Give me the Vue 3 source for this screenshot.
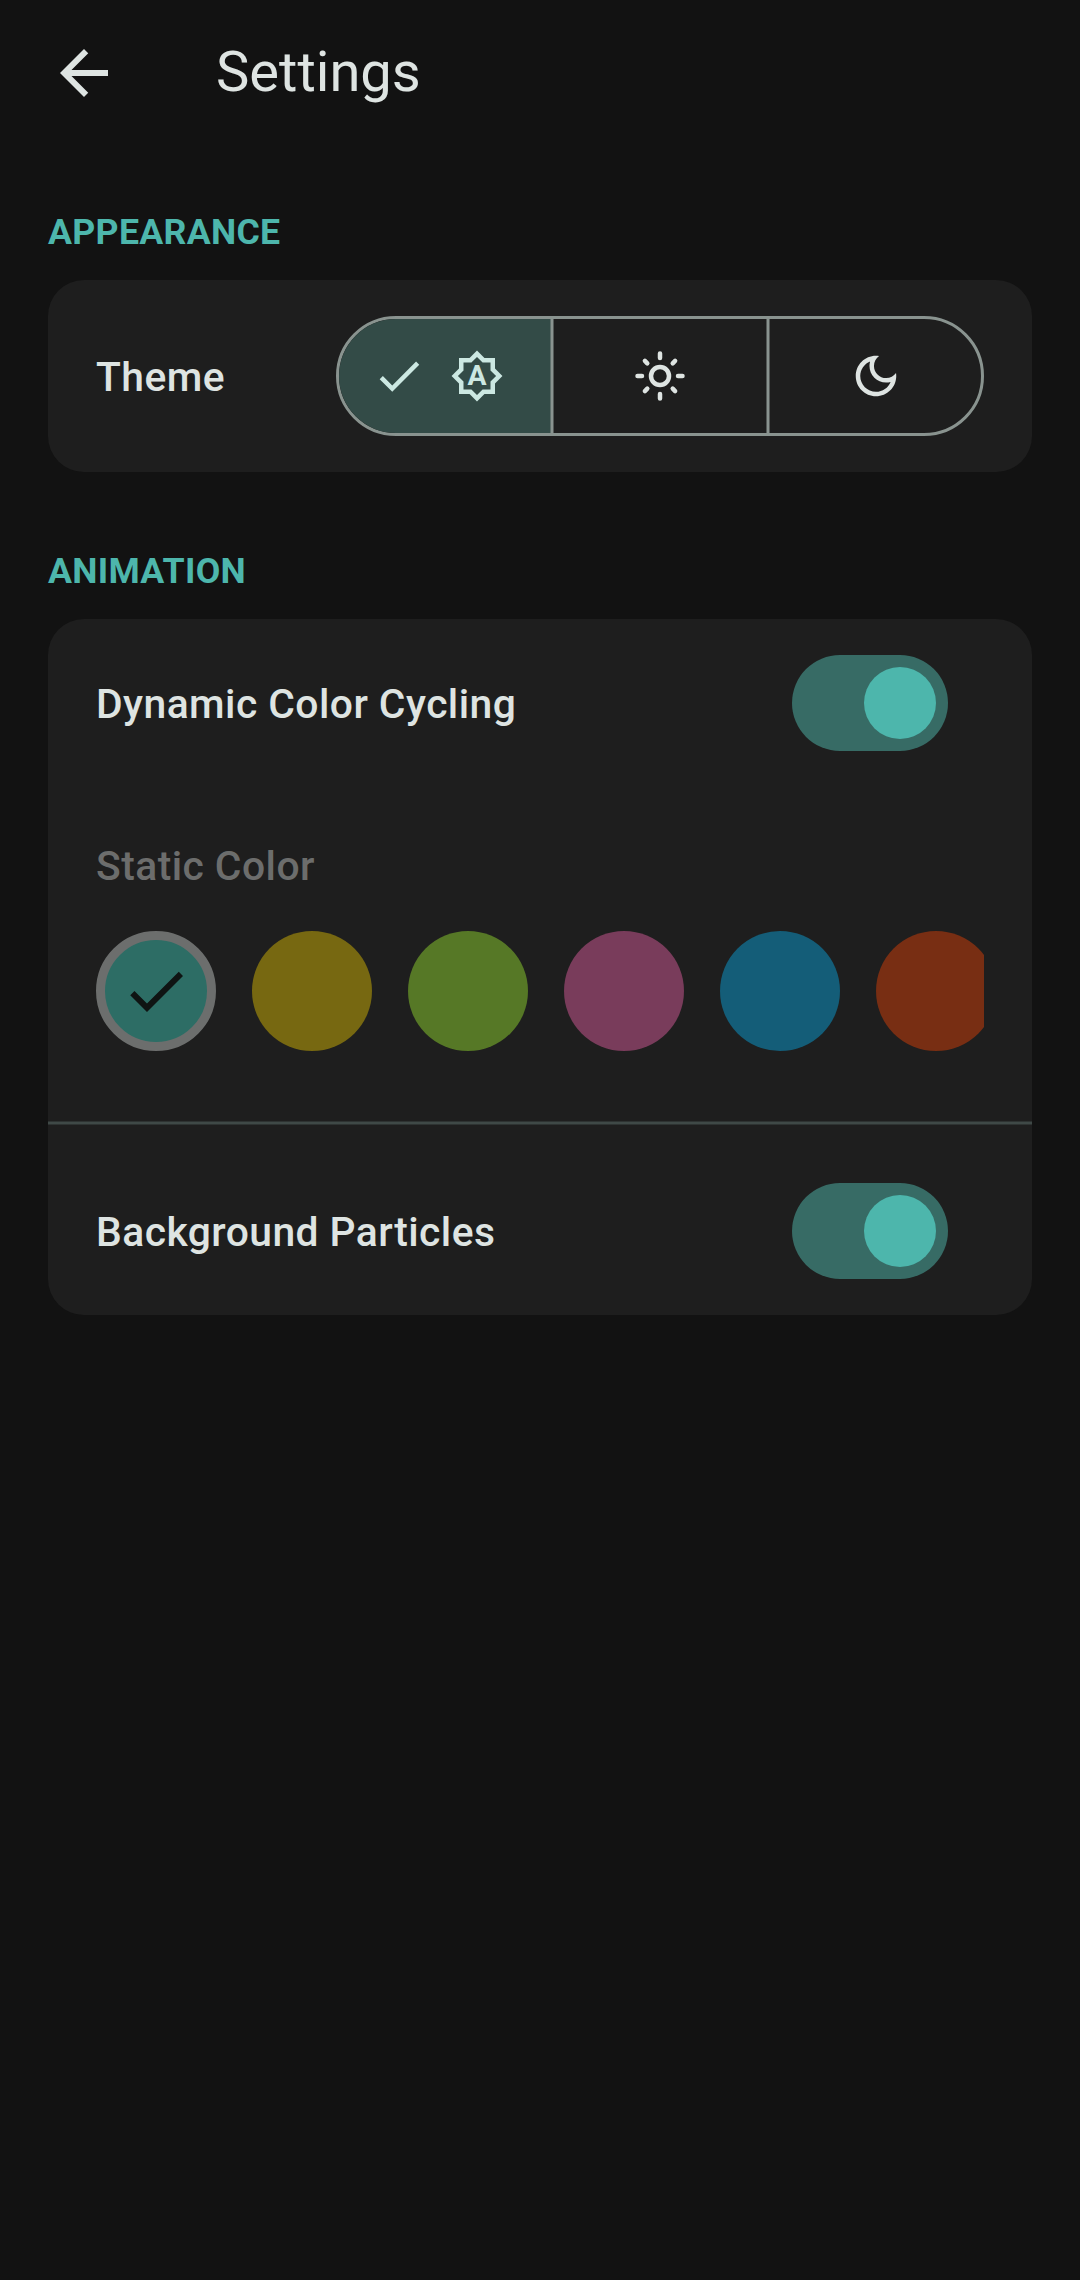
<script setup>
import { ref } from 'vue'

const theme = ref('auto')
const cycling = ref(true)
const particles = ref(true)
const selected = ref(0)

const swatches = ['#2d6d65', '#776811', '#567826', '#793c5b', '#145d78', '#782e13']
</script>

<template>
  <main class="screen">
    <header class="topbar">
      <button class="back" aria-label="Back">
        <svg viewBox="0 0 24 24"><path d="M20 11H7.83l5.59-5.59L12 4l-8 8 8 8 1.41-1.41L7.83 13H20v-2z" /></svg>
      </button>
      <h1>Settings</h1>
    </header>

    <section class="appearance">
      <h2>APPEARANCE</h2>
      <div class="card theme-card">
        <span class="label">Theme</span>
        <div class="segments">
          <button class="segment auto" :class="{ active: theme === 'auto' }" @click="theme = 'auto'">
            <svg viewBox="0 0 24 24"><path d="M9 16.17L4.83 12l-1.42 1.41L9 19 21 7l-1.41-1.41z" /></svg>
            <svg viewBox="0 0 24 24">
              <path fill-rule="evenodd" d="M20 8.69V4h-4.69L12 .69 8.69 4H4v4.69L.69 12 4 15.31V20h4.69L12 23.31 15.31 20H20v-4.69L23.31 12 20 8.69zm-2 5.79V18h-3.52L12 20.48 9.52 18H6v-3.52L3.52 12 6 9.52V6h3.52L12 3.52 14.48 6H18v3.52L20.48 12 18 14.48z" />
              <text x="12" y="16" text-anchor="middle">A</text>
            </svg>
          </button>
          <i class="divider"></i>
          <button class="segment light" @click="theme = 'light'">
            <svg viewBox="0 0 24 24" class="sun">
              <circle cx="12" cy="12" r="4" />
              <path d="M12 2v2M12 20v2M2 12h2M20 12h2M5.29 5.29l1.06 1.06M17.65 17.65l1.06 1.06M5.29 18.71l1.06-1.06M17.65 6.35l1.06-1.06" />
            </svg>
          </button>
          <i class="divider"></i>
          <button class="segment dark" @click="theme = 'dark'">
            <svg viewBox="0 0 24 24"><path d="M9.37 5.51C9.19 6.15 9.1 6.82 9.1 7.5c0 4.08 3.32 7.4 7.4 7.4.68 0 1.35-.09 1.99-.27C17.45 17.19 14.93 19 12 19c-3.86 0-7-3.14-7-7 0-2.93 1.81-5.45 4.37-6.49zM12 3c-4.97 0-9 4.03-9 9s4.03 9 9 9 9-4.03 9-9c0-.46-.04-.92-.1-1.36-.98 1.37-2.58 2.26-4.4 2.26-2.98 0-5.4-2.42-5.4-5.4 0-1.81.89-3.42 2.26-4.4C12.92 3.04 12.46 3 12 3z" /></svg>
          </button>
        </div>
      </div>
    </section>

    <section class="animation">
      <h2>ANIMATION</h2>
      <div class="card animation-card">
        <div class="row">
          <span class="label">Dynamic Color Cycling</span>
          <button class="switch" :class="{ on: cycling }" role="switch" :aria-checked="cycling" @click="cycling = !cycling"><i></i></button>
        </div>
        <div class="label static-label">Static Color</div>
        <div class="swatches">
          <button
            v-for="(color, i) in swatches"
            :key="color"
            class="swatch"
            :class="{ selected: i === selected }"
            :style="{ backgroundColor: color }"
          >
            <svg v-if="i === selected" viewBox="0 0 24 24"><path d="M9 16.17L4.83 12l-1.42 1.41L9 19 21 7l-1.41-1.41z" /></svg>
          </button>
        </div>
        <div class="rule"></div>
        <div class="row">
          <span class="label">Background Particles</span>
          <button class="switch" :class="{ on: particles }" role="switch" :aria-checked="particles" @click="particles = !particles"><i></i></button>
        </div>
      </div>
    </section>
  </main>
</template>

<style>
body {
  background: #121212;
}
</style>

<style scoped>
* {
  box-sizing: border-box;
}
button {
  border: 0;
  padding: 0;
  background: none;
  color: inherit;
}
svg {
  display: block;
  fill: currentColor;
}
.screen {
  min-height: 2280px;
  background: #121212;
  color: #dee4e2;
  font-family: Roboto, sans-serif;
}
.topbar {
  height: 144px;
  padding-left: 48px;
  display: flex;
  align-items: center;
}
.back svg {
  width: 72px;
  height: 72px;
  margin-top: 2px;
}
h1 {
  margin: 0 0 0 96px;
  font-size: 56.1px;
  font-weight: 400;
  line-height: 72px;
}
section {
  padding: 0 48px;
}
.appearance {
  padding-top: 64px;
}
.animation {
  padding-top: 75px;
}
h2 {
  margin: 0 0 24px;
  font-size: 35.7px;
  font-weight: 700;
  line-height: 48px;
  letter-spacing: 0.3px;
  color: #4db6ac;
}
.card {
  background: #1e1e1e;
  border-radius: 36px;
}
.label {
  font-size: 40.8px;
  font-weight: 500;
  line-height: 48px;
  letter-spacing: 0.45px;
}
.row .label,
.theme-card .label {
  padding-top: 2px;
}
.theme-card {
  height: 192px;
  padding: 0 48px;
  display: flex;
  align-items: center;
  justify-content: space-between;
}
.segments {
  width: 648px;
  height: 120px;
  border: 3px solid #89938f;
  border-radius: 60px;
  overflow: hidden;
  display: flex;
}
.segment {
  display: flex;
  align-items: center;
  justify-content: center;
}
.segment svg {
  width: 54px;
  height: 54px;
}
.segment.auto {
  flex: 0 0 212px;
  padding-left: 33px;
  gap: 24px;
  justify-content: flex-start;
}
.segment.light {
  flex: 0 0 213px;
  padding-right: 1px;
}
.segment.dark {
  flex: 1;
  padding-left: 1px;
}
.segment.active {
  background: #334b47;
  color: #cce8e2;
}
.segment text {
  font-family: Roboto, sans-serif;
  font-size: 12.6px;
  font-weight: 700;
}
.divider {
  flex: 0 0 3px;
  background: #89938f;
  transform: translateX(-0.5px);
}
.sun {
  fill: none;
  stroke: currentColor;
  stroke-width: 2;
  stroke-linecap: round;
}
.animation-card {
  padding: 36px 0;
}
.row {
  height: 96px;
  padding: 0 84px 0 48px;
  display: flex;
  align-items: center;
  justify-content: space-between;
}
.switch {
  width: 156px;
  height: 96px;
  padding: 12px;
  border-radius: 48px;
  background: #3a3f3e;
  display: flex;
}
.switch i {
  width: 72px;
  height: 72px;
  border-radius: 50%;
  background: #89938f;
}
.switch.on {
  background: #376b65;
  justify-content: flex-end;
}
.switch.on i {
  background: #4db6ac;
}
.static-label {
  margin: 91px 48px 41px;
  color: #6c6d6c;
}
.swatches {
  margin: 0 48px;
  display: flex;
  gap: 36px;
  overflow: hidden;
}
.swatch {
  flex: 0 0 120px;
  height: 120px;
  border-radius: 50%;
  display: flex;
  align-items: center;
  justify-content: center;
}
.swatch.selected {
  border: 9px solid #6c6e6d;
}
.swatch svg {
  width: 72px;
  height: 72px;
  color: #0f1413;
}
.rule {
  height: 3px;
  margin: 71px 0 58px;
  background: #3f4947;
  transform: translateY(-0.5px);
}
</style>
